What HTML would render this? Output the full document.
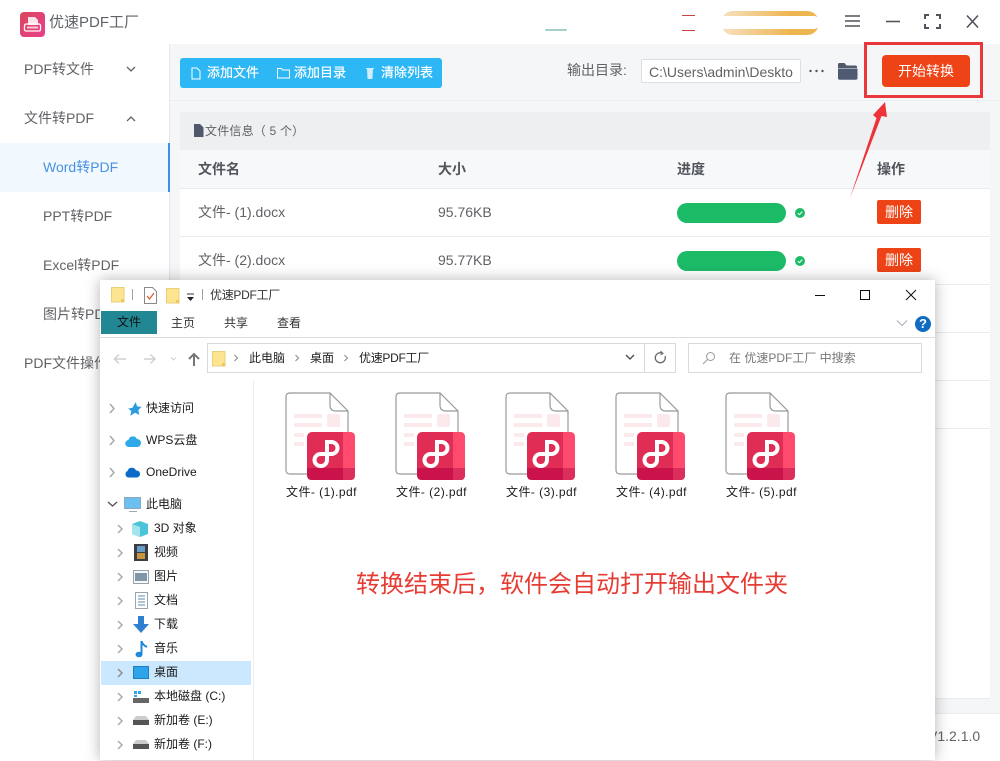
<!DOCTYPE html>
<html lang="zh"><head><meta charset="utf-8"><title>优速PDF工厂</title>
<style>
html,body{margin:0;padding:0}
body{width:1000px;height:760px;overflow:hidden;background:#fff;position:relative;font-family:"Liberation Sans","Noto Sans CJK SC",sans-serif;color:#606266}
.a{position:absolute}
.t{position:absolute;white-space:nowrap;line-height:20px}
.m{font-size:14px;color:#606266}
.w{font-size:12px;color:#1a1a1a}
.f{letter-spacing:.45px}
.b{-webkit-text-stroke:.2px #fff}
.hd{font-size:14px;font-weight:700;color:#50555c}
.del{position:absolute;left:877px;width:44px;height:24px;background:#ee4316;border-radius:2px;color:#fff;font-size:14px;line-height:24px;text-align:center}
.bar{position:absolute;left:677px;width:109px;height:20px;background:#1cbb68;border-radius:10px}
.ln{position:absolute;left:180px;width:810px;height:1px;background:#e9ebee}
svg{position:absolute;display:block}
</style></head><body>

<!-- title bar -->
<svg style="left:20px;top:12px" width="25" height="25" viewBox="0 0 25 25"><defs><linearGradient id="g" x1="0" y1="0" x2="1" y2="1"><stop offset="0" stop-color="#d9475c"/><stop offset="1" stop-color="#ea3f8c"/></linearGradient></defs><rect width="25" height="25" rx="4" fill="url(#g)"/><path d="M8 5h7l3 3v5H8z" fill="#fff" opacity=".85"/><rect x="4.500" y="12" width="16" height="7" rx="1.500" fill="none" stroke="#fff" stroke-width="1.300"/><rect x="7" y="14.500" width="11" height="2" fill="#fff" opacity=".7"/></svg>
<div class="t" style="left:49px;top:13px;font-size:15px;color:#5f6368">优速PDF工厂</div>

<div class="a" style="left:545px;top:29px;width:22px;height:2px;background:#a5d0ca;border-radius:2px"></div>
<div class="a" style="left:682px;top:15px;width:13px;height:1px;background:#c9453a"></div>
<div class="a" style="left:682px;top:30px;width:13px;height:1px;background:#c9453a"></div>
<div class="a" style="left:721px;top:11px;width:98px;height:24px;border-radius:12px;background:linear-gradient(90deg,#f5e2c0,#eeb653 70%,#edb54e)"></div>
<div class="a" style="left:718px;top:16px;width:102px;height:13px;background:#fff;border-radius:6px"></div>

<svg style="left:840px;top:10px" width="140" height="24" viewBox="0 0 140 24" fill="none" stroke="#50545c" stroke-width="1.600"><path d="M5 6h15M5 11h15M5 16h15"/><path d="M46 11.500h14"/><path d="M85 9V5h4M96 5h4v4M100 14v4h-4M89 18h-4v-4" stroke-width="2"/><path d="M127 5.500l11 12M138 5.500l-11 12"/></svg>

<!-- sidebar -->
<div class="a" style="left:169px;top:44px;width:1px;height:716px;background:#e4e7ed"></div>
<div class="t m" style="left:24px;top:59px">PDF转文件</div>
<svg style="left:125px;top:65px" width="12" height="9" viewBox="0 0 12 9" fill="none" stroke="#606266" stroke-width="1.300"><path d="M2 2l4 4 4-4"/></svg>
<div class="t m" style="left:24px;top:108px">文件转PDF</div>
<svg style="left:125px;top:115px" width="12" height="9" viewBox="0 0 12 9" fill="none" stroke="#606266" stroke-width="1.300"><path d="M2 6l4-4 4 4"/></svg>
<div class="a" style="left:0;top:143px;width:168px;height:49px;background:#f2f9fe"></div>
<div class="a" style="left:168px;top:143px;width:2px;height:49px;background:#3f8fe8"></div>
<div class="t m" style="left:43px;top:157px;color:#4a90e2">Word转PDF</div>
<div class="t m" style="left:43px;top:206px">PPT转PDF</div>
<div class="t m" style="left:43px;top:255px">Excel转PDF</div>
<div class="t m" style="left:43px;top:304px">图片转PDF</div>
<div class="t m" style="left:24px;top:353px">PDF文件操作</div>

<!-- main -->
<div class="a" style="left:170px;top:44px;width:830px;height:716px;background:#f5f6f8"></div>
<div class="a" style="left:170px;top:100px;width:830px;height:1px;background:#eceef1"></div>
<div class="a" style="left:180px;top:58px;width:262px;height:30px;background:#2db7f5;border-radius:3px"></div>
<svg style="left:190px;top:66px" width="14" height="15" viewBox="0 0 14 15" fill="none" stroke="#fff" stroke-width="1"><path d="M2 2h5l3 3v8H2z"/></svg>
<div class="t b" style="left:207px;top:63px;font-size:13px;color:#fff">添加文件</div>
<svg style="left:276px;top:66px" width="15" height="15" viewBox="0 0 15 15" fill="none" stroke="#fff" stroke-width="1"><path d="M1.500 2.500h4l1 1.500h7v8h-12z"/></svg>
<div class="t b" style="left:294px;top:63px;font-size:13px;color:#fff">添加目录</div>
<svg style="left:363px;top:66px" width="14" height="15" viewBox="0 0 14 15"><path d="M4 3h6l-.6 10H4.600z" fill="#cfeefc"/><path d="M3 2.500h8" stroke="#cfeefc"/></svg>
<div class="t b" style="left:381px;top:63px;font-size:13px;color:#fff">清除列表</div>

<div class="t" style="left:567px;top:60px;font-size:14px;color:#606266">输出目录:</div>
<div class="a" style="left:641px;top:59px;width:158px;height:22px;border:1px solid #dcdfe6;border-radius:2px;background:#fff"></div>
<div class="t" style="left:649px;top:62px;font-size:14px;color:#606266">C:\Users\admin\Deskto</div>
<svg style="left:808px;top:68px" width="18" height="6" viewBox="0 0 18 6" fill="#50555f"><circle cx="2.500" cy="3" r="1.200"/><circle cx="8.500" cy="3" r="1.200"/><circle cx="14.500" cy="3" r="1.200"/></svg>
<svg style="left:837px;top:62px" width="21" height="19" viewBox="0 0 21 19"><path d="M1 2.500q0-1.500 1.500-1.500h5l2 2.500h9q1.500 0 1.500 1.500v1H1z" fill="#50596b"/><path d="M1 6.500h19.500V16q0 1.800-1.800 1.800H2.800Q1 17.800 1 16z" fill="#4e5a71"/></svg>

<div class="a" style="left:864px;top:42px;width:113px;height:50px;border:3px solid #e8383c"></div>
<div class="a" style="left:882px;top:55px;width:88px;height:32px;background:#ee4316;border-radius:4px"></div>
<div class="t" style="left:882px;top:61px;width:88px;text-align:center;font-size:14px;color:#fff">开始转换</div>

<div class="a" style="left:180px;top:112px;width:810px;height:38px;background:#eeeff1"></div>
<svg style="left:193px;top:124px" width="11" height="13" viewBox="0 0 11 13"><path d="M1 0h6l3.500 3.500V13H1z" fill="#50596b"/></svg>
<div class="t" style="left:205px;top:121px;font-size:12px;color:#606266;letter-spacing:.2px">文件信息（ 5 个）</div>

<div class="a" style="left:180px;top:150px;width:810px;height:548px;background:#fff"></div>
<div class="a" style="left:180px;top:150px;width:810px;height:38px;background:#f7f8f9"></div>
<div class="t hd" style="left:198px;top:159px">文件名</div>
<div class="t hd" style="left:438px;top:159px">大小</div>
<div class="t hd" style="left:677px;top:159px">进度</div>
<div class="t hd" style="left:877px;top:159px">操作</div>
<div class="ln" style="top:188px"></div>
<div class="ln" style="top:236px"></div>
<div class="ln" style="top:284px"></div>
<div class="ln" style="top:332px"></div>
<div class="ln" style="top:380px"></div>
<div class="ln" style="top:428px"></div>
<div class="ln" style="top:698px"></div>
<div class="a" style="left:170px;top:713px;width:830px;height:47px;background:#fff;border-top:1px solid #eceef1"></div>

<div class="t m" style="left:198px;top:202px">文件- (1).docx</div>
<div class="t m" style="left:438px;top:202px">95.76KB</div>
<div class="bar" style="top:203px"></div>
<svg style="left:795px;top:208px" width="10" height="10" viewBox="0 0 10 10"><circle cx="5" cy="5" r="5" fill="#1cbb68"/><path d="M2.800 5.200L4.400 6.700 7.300 3.600" fill="none" stroke="#fff"/></svg>
<div class="del" style="top:200px">删除</div>
<div class="t m" style="left:198px;top:250px">文件- (2).docx</div>
<div class="t m" style="left:438px;top:250px">95.77KB</div>
<div class="bar" style="top:251px"></div>
<svg style="left:795px;top:256px" width="10" height="10" viewBox="0 0 10 10"><circle cx="5" cy="5" r="5" fill="#1cbb68"/><path d="M2.800 5.200L4.400 6.700 7.300 3.600" fill="none" stroke="#fff"/></svg>
<div class="del" style="top:248px">删除</div>

<div class="t" style="left:928px;top:726px;font-size:14px;color:#606266">V1.2.1.0</div>

<!-- arrow -->
<svg style="left:845px;top:98px" width="50" height="102" viewBox="0 0 50 102"><path d="M5 100L31.500 20 28 17 40 4 42 19 36.500 18z" fill="#ee3338"/></svg>

<!-- explorer -->
<div class="a" style="left:100px;top:280px;width:835px;height:480px;background:#fff;box-shadow:0 0 14px rgba(0,0,0,.3)"></div>

<svg width="0" height="0" style="position:absolute"><defs>
<symbol id="fld" viewBox="0 0 14 16"><path d="M.5.500h12.500v14.500H.5z" fill="#fde58f" stroke="#e7cf7c"/><path d="M10 12h3v3h-3z" fill="#efc75e"/></symbol>
<symbol id="pdf" viewBox="0 0 71 89"><path d="M5 1h40l18 18v59q0 4-4 4H5q-4 0-4-4V5q0-4 4-4z" fill="#fff" stroke="#999" stroke-width="1.200"/><path d="M45 1v12q0 6 6 6h12" fill="none" stroke="#999" stroke-width="1.200"/><g fill="#fbe9ec"><rect x="9" y="22" width="28" height="4"/><rect x="9" y="31" width="28" height="4"/><rect x="9" y="41" width="10" height="4"/><rect x="9" y="50" width="10" height="4"/><rect x="42" y="22" width="13" height="13" rx="2"/></g><rect x="22" y="40" width="48" height="48" rx="5" fill="#e02d55"/><path d="M58 40h7q5 0 5 5v38q0 5-5 5h-7z" fill="#fd4a6d"/><path d="M22 76h48v7q0 5-5 5H27q-5 0-5-5z" fill="#c9134a"/><path d="M58 76h12v7q0 5-5 5h-7z" fill="#dc2e5c"/><path d="M42 68V50h4.500a6 6 0 0 1 0 12H35.500a6 6 0 0 0 0 12 6 6 0 0 0 6.500-6" fill="none" stroke="#fff" stroke-width="4"/></symbol>
</defs></svg>

<svg style="left:111px;top:287px" width="14" height="16"><use href="#fld"/></svg>
<div class="a" style="left:132px;top:289px;width:1px;height:11px;background:#a0a0a0"></div>
<svg style="left:144px;top:287px" width="13" height="17" viewBox="0 0 13 17"><path d="M.5.500h8l4 4v12H.5z" fill="#fff" stroke="#8a8a8a"/><path d="M3 9l2.500 3L10 6" fill="none" stroke="#e0562a" stroke-width="1.200"/></svg>
<svg style="left:166px;top:288px" width="14" height="16"><use href="#fld"/></svg>
<svg style="left:186px;top:293px" width="9" height="9" viewBox="0 0 9 9"><path d="M1 1h7" stroke="#333"/><path d="M1 4h7L4.500 8z" fill="#222"/></svg>
<div class="a" style="left:202px;top:289px;width:1px;height:11px;background:#a0a0a0"></div>
<div class="t w" style="left:210px;top:285px;color:#333;letter-spacing:-.3px">优速PDF工厂</div>

<svg style="left:815px;top:285px" width="106" height="20" viewBox="0 0 106 20" fill="none" stroke="#111" stroke-width="1"><path d="M0 10.500h10"/><rect x="45.500" y="5.500" width="9" height="9"/><path d="M91 5l10 10M101 5l-10 10"/></svg>

<div class="a" style="left:101px;top:311px;width:56px;height:23px;background:#208793"></div>
<div class="t w" style="left:117px;top:312px;color:#111">文件</div>
<div class="t w" style="left:171px;top:313px;color:#333">主页</div>
<div class="t w" style="left:224px;top:313px;color:#333">共享</div>
<div class="t w" style="left:277px;top:313px;color:#333">查看</div>
<svg style="left:895px;top:319px" width="14" height="9" viewBox="0 0 14 9" fill="none" stroke="#aab" stroke-width="1"><path d="M2 1.500l5 5 5-5"/></svg>
<div class="a" style="left:915px;top:316px;width:16px;height:16px;border-radius:50%;background:#0f6cc2;color:#fff;font-size:13px;font-weight:700;line-height:16px;text-align:center">?</div>
<div class="a" style="left:100px;top:337px;width:835px;height:1px;background:#dcdcdc"></div>

<svg style="left:112px;top:350px" width="92" height="18" viewBox="0 0 92 18" fill="none" stroke="#d0d0d0" stroke-width="1.500"><path d="M14 9H3M7 4.500L2.500 9 7 13.500"/><path d="M32 9h11M38.500 4.500L43 9l-4.500 4.500"/><path d="M59 7.500l2.500 2.500 2.500-2.500" stroke-width="1"/><path d="M82 16V4M77 9l5-5 5 5" stroke="#777" stroke-width="2"/></svg>
<div class="a" style="left:207px;top:343px;height:30px;border:1px solid #d9d9d9;box-sizing:border-box;width:469px"></div>
<div class="a" style="left:644px;top:343px;width:1px;height:30px;background:#d9d9d9"></div>
<svg style="left:212px;top:350px" width="14" height="18"><use href="#fld"/></svg>
<svg style="left:232px;top:350px" width="8" height="16" viewBox="0 0 8 16" fill="none" stroke="#888"><path d="M2.500 5l3 3-3 3"/></svg>
<div class="t w" style="left:249px;top:348px;color:#222">此电脑</div>
<svg style="left:293px;top:350px" width="8" height="16" viewBox="0 0 8 16" fill="none" stroke="#888"><path d="M2.500 5l3 3-3 3"/></svg>
<div class="t w" style="left:310px;top:348px;color:#222">桌面</div>
<svg style="left:342px;top:350px" width="8" height="16" viewBox="0 0 8 16" fill="none" stroke="#888"><path d="M2.500 5l3 3-3 3"/></svg>
<div class="t w" style="left:359px;top:348px;color:#222;letter-spacing:-.3px">优速PDF工厂</div>
<svg style="left:624px;top:353px" width="12" height="10" viewBox="0 0 12 10" fill="none" stroke="#555" stroke-width="1.500"><path d="M2 2l4 4 4-4"/></svg>
<svg style="left:653px;top:350px" width="15" height="16" viewBox="0 0 15 16" fill="none" stroke="#666" stroke-width="1.300"><path d="M12 6a5 5 0 1 1-2-2.500"/><path d="M7.500 1l2.500 2.500L7.500 5" stroke-width="1"/></svg>
<div class="a" style="left:688px;top:343px;width:234px;height:30px;border:1px solid #d9d9d9;box-sizing:border-box"></div>
<svg style="left:702px;top:351px" width="14" height="14" viewBox="0 0 14 14" fill="none" stroke="#999"><circle cx="8.500" cy="5.500" r="4"/><path d="M5.500 8.500L1 13"/></svg>
<div class="t w" style="left:729px;top:348px;color:#777">在 优速PDF工厂 中搜索</div>

<div class="a" style="left:253px;top:380px;width:1px;height:380px;background:#eeeeee"></div>

<!-- nav tree -->
<svg style="left:107px;top:402px" width="12" height="110" viewBox="0 0 12 110" fill="none" stroke="#a6a6a6" stroke-width="1.400"><path d="M3 2l4 4.500-4 4.500M3 34l4 4.500-4 4.500M3 66l4 4.500-4 4.500"/><path d="M1 100l4.500 4 4.500-4" stroke="#555"/></svg>
<svg style="left:115px;top:518px" width="12" height="240" viewBox="0 0 12 240" fill="none" stroke="#a6a6a6" stroke-width="1.400"><path d="M3 7l4 4-4 4M3 31l4 4-4 4M3 55l4 4-4 4M3 79l4 4-4 4M3 103l4 4-4 4M3 127l4 4-4 4M3 175l4 4-4 4M3 199l4 4-4 4M3 223l4 4-4 4"/></svg>

<svg style="left:126px;top:401px" width="16" height="16" viewBox="0 0 15 15"><path d="M9 1l1.500 4 4 .5-3 3 1 4.500L8.500 11 4 14l1-4.500L2 7l4-.5z" fill="#2d9be0"/></svg>
<div class="t w" style="left:146px;top:398px">快速访问</div>
<svg style="left:125px;top:434px" width="16" height="14" viewBox="0 0 16 14"><path d="M4 13a3.500 3.500 0 0 1-.5-7A4.500 4.500 0 0 1 12 5a4 4 0 0 1 0 8z" fill="#2fa8e8"/></svg>
<div class="t w" style="left:146px;top:430px">WPS云盘</div>
<svg style="left:124px;top:466px" width="17" height="12" viewBox="0 0 17 12"><path d="M4 11.500a3.500 3.500 0 0 1-.5-6.500A4.500 4.500 0 0 1 12 4.500a3.500 3.500 0 0 1 1 7z" fill="#0b6ac8"/></svg>
<div class="t w" style="left:146px;top:462px">OneDrive</div>
<svg style="left:124px;top:497px" width="18" height="16" viewBox="0 0 18 16"><rect x=".5" y=".5" width="16" height="11" fill="#6cc0f0" stroke="#8aa8c0"/><path d="M5 14.500h8" stroke="#9ab"/></svg>
<div class="t w" style="left:146px;top:494px">此电脑</div>

<svg style="left:132px;top:521px" width="17" height="16" viewBox="0 0 17 16"><path d="M8 0l8 3v10l-8 3-8-3V3z" fill="#4cc4d8"/><path d="M8 6v10L0 13V3z" fill="#a4e4ee"/></svg>
<div class="t w" style="left:154px;top:518px">3D 对象</div>
<svg style="left:134px;top:544px" width="14" height="17" viewBox="0 0 14 17"><rect width="14" height="17" fill="#3c3c44"/><rect x="3" y="2" width="8" height="6" fill="#6a9cc8"/><rect x="3" y="9" width="8" height="6" fill="#c8963e"/></svg>
<div class="t w" style="left:154px;top:542px">视频</div>
<svg style="left:133px;top:570px" width="16" height="14" viewBox="0 0 16 14"><rect x=".5" y=".5" width="15" height="13" fill="#f4f6f8" stroke="#9aa2aa"/><rect x="2" y="3" width="12" height="8" fill="#7f97a8"/></svg>
<div class="t w" style="left:154px;top:566px">图片</div>
<svg style="left:135px;top:592px" width="13" height="17" viewBox="0 0 13 17" fill="none" stroke="#9aa4ae"><path d="M.5.500h12v16H.5z" fill="#fff"/><path d="M3 4h7M3 7h7M3 10h7M3 13h7" stroke="#5a8aa8"/></svg>
<div class="t w" style="left:154px;top:590px">文档</div>
<svg style="left:133px;top:616px" width="16" height="17" viewBox="0 0 16 17"><path d="M5 0h6v8h5l-8 9-8-9h5z" fill="#2f80d0"/></svg>
<div class="t w" style="left:154px;top:614px">下载</div>
<svg style="left:135px;top:640px" width="13" height="18" viewBox="0 0 13 18" fill="none"><path d="M6.500 1v13" stroke="#1f88d8" stroke-width="2"/><ellipse cx="4" cy="14.500" rx="3.500" ry="2.800" fill="#1f88d8"/><path d="M6.500 1q1 4 5.500 6" stroke="#1f88d8" stroke-width="2"/></svg>
<div class="t w" style="left:154px;top:638px">音乐</div>
<div class="a" style="left:101px;top:661px;width:150px;height:24px;background:#cce8ff"></div>
<svg style="left:115px;top:664px" width="12" height="18" viewBox="0 0 12 18" fill="none" stroke="#8a8a8a" stroke-width="1.400"><path d="M3 5l4 4-4 4"/></svg>
<svg style="left:133px;top:666px" width="16" height="14" viewBox="0 0 16 14"><rect x=".5" y=".5" width="15" height="12" fill="#2ea3ea" stroke="#1d7fc0"/></svg>
<div class="t w" style="left:154px;top:662px">桌面</div>
<svg style="left:133px;top:690px" width="16" height="14" viewBox="0 0 16 14"><rect y="8" width="16" height="5" fill="#666"/><rect x="1" y="1" width="3" height="3" fill="#2ea3ea"/><rect x="5" y="1" width="3" height="3" fill="#2ea3ea"/><rect x="1" y="5" width="3" height="2" fill="#2ea3ea"/></svg>
<div class="t w" style="left:154px;top:686px">本地磁盘 (C:)</div>
<svg style="left:133px;top:716px" width="16" height="10" viewBox="0 0 16 10"><path d="M3 0h10l3 4H0z" fill="#ccc"/><rect y="4" width="16" height="5" fill="#555"/></svg>
<div class="t w" style="left:154px;top:710px">新加卷 (E:)</div>
<svg style="left:133px;top:740px" width="16" height="10" viewBox="0 0 16 10"><path d="M3 0h10l3 4H0z" fill="#ccc"/><rect y="4" width="16" height="5" fill="#555"/></svg>
<div class="t w" style="left:154px;top:734px">新加卷 (F:)</div>

<!-- files -->
<svg style="left:285px;top:392px" width="71" height="89"><use href="#pdf"/></svg>
<svg style="left:395px;top:392px" width="71" height="89"><use href="#pdf"/></svg>
<svg style="left:505px;top:392px" width="71" height="89"><use href="#pdf"/></svg>
<svg style="left:615px;top:392px" width="71" height="89"><use href="#pdf"/></svg>
<svg style="left:725px;top:392px" width="71" height="89"><use href="#pdf"/></svg>
<div class="t w f" style="left:286px;top:482px">文件- (1).pdf</div>
<div class="t w f" style="left:396px;top:482px">文件- (2).pdf</div>
<div class="t w f" style="left:506px;top:482px">文件- (3).pdf</div>
<div class="t w f" style="left:616px;top:482px">文件- (4).pdf</div>
<div class="t w f" style="left:726px;top:482px">文件- (5).pdf</div>

<div class="t" style="left:356px;top:570px;font-size:24px;line-height:30px;color:#e63c34">转换结束后，软件会自动打开输出文件夹</div>
</body></html>
